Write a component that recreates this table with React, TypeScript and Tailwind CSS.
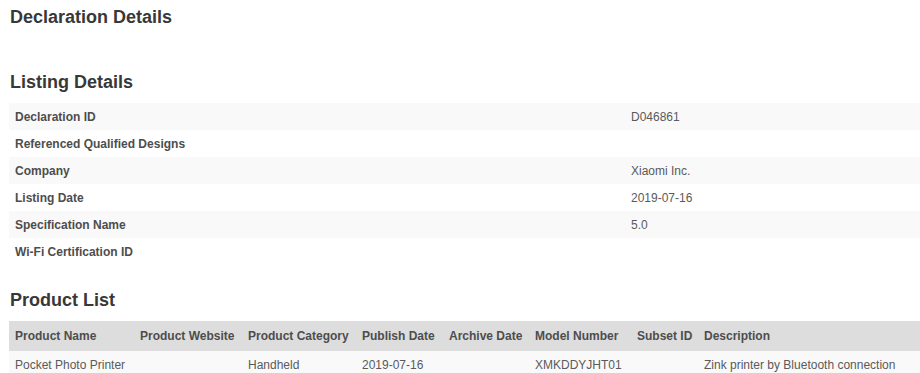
const listing = [
  { label: 'Declaration ID', value: 'D046861' },
  { label: 'Referenced Qualified Designs', value: '' },
  { label: 'Company', value: 'Xiaomi Inc.' },
  { label: 'Listing Date', value: '2019-07-16' },
  { label: 'Specification Name', value: '5.0' },
  { label: 'Wi-Fi Certification ID', value: '' },
];

const columns = [
  { name: 'Product Name', width: 'w-[125px]' },
  { name: 'Product Website', width: 'w-[108px]' },
  { name: 'Product Category', width: 'w-[114px]' },
  { name: 'Publish Date', width: 'w-[87px]' },
  { name: 'Archive Date', width: 'w-[86px]' },
  { name: 'Model Number', width: 'w-[102px]' },
  { name: 'Subset ID', width: 'w-[67px]' },
  { name: 'Description', width: '' },
];

const products = [
  [
    'Pocket Photo Printer',
    '',
    'Handheld',
    '2019-07-16',
    '',
    'XMKDDYJHT01',
    '',
    'Zink printer by Bluetooth connection',
  ],
];

const App = () => {
  return (
    <div className="min-h-[373px] bg-white pl-[9px] font-['Liberation_Sans',Arial,sans-serif] text-[12px] text-[#5a5a5a]">
      {/* Declaration Details */}
      <h2 className="pt-[7px] pl-[1px] text-[18px] leading-[20px] font-bold text-[#383838]">Declaration Details</h2>

      {/* Listing Details */}
      <h3 className="mt-[45px] pl-[1px] text-[18px] leading-[20px] font-bold text-[#383838]">Listing Details</h3>
      <table className="mt-[11px] w-full border-collapse">
        <tbody>
          {listing.map((row, i) => (
            <tr key={row.label} className={i % 2 === 0 ? 'bg-[#f9f9f9]' : 'bg-white'}>
              <td className="h-[27px] w-[616px] px-[6px] py-0 font-bold text-[#4d4d4d]">{row.label}</td>
              <td className="h-[27px] px-[6px] py-0">{row.value}</td>
            </tr>
          ))}
        </tbody>
      </table>

      {/* Product List */}
      <h3 className="mt-[25px] pl-[1px] text-[18px] leading-[20px] font-bold text-[#383838]">Product List</h3>
      <table className="mt-[11px] w-full table-fixed border-collapse">
        <thead>
          <tr className="bg-[#ddd]">
            {columns.map((col) => (
              <th key={col.name} className={`h-[30px] px-[6px] py-0 text-left font-bold whitespace-nowrap text-[#4d4d4d] ${col.width}`}>
                {col.name}
              </th>
            ))}
          </tr>
        </thead>
        <tbody>
          {products.map((row, i) => (
            <tr key={i} className="bg-[#f9f9f9]">
              {row.map((cell, j) => (
                <td key={j} className="h-[27px] px-[6px] py-0 whitespace-nowrap">
                  {cell}
                </td>
              ))}
            </tr>
          ))}
        </tbody>
      </table>
    </div>
  );
};

export default App;
